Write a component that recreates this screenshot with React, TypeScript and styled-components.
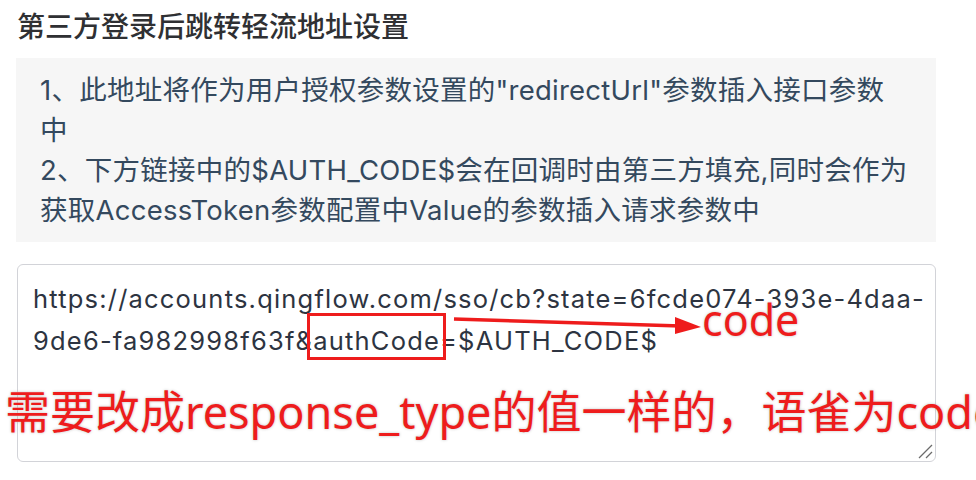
import styled, { createGlobalStyle } from "styled-components";

const GlobalStyle = createGlobalStyle`
  html, body {
    margin: 0;
    padding: 0;
    background: #ffffff;
  }
  body {
    font-family: "Inter", "Noto Sans CJK SC", sans-serif;
  }
`;

const Page = styled.div`
  width: 920px;
  padding: 9px 0 0 16px;
  display: flex;
  flex-direction: column;
`;

const Title = styled.h2`
  margin: 0 0 0 1px;
  font-size: 28px;
  line-height: 36px;
  font-weight: 500;
  color: #2f3033;
`;

const InfoBox = styled.div`
  margin-top: 13px;
  background: #f6f6f6;
  padding: 12px 24px;
  font-size: 27.5px;
  line-height: 40px;
  letter-spacing: 0.25px;
  color: #34495e;
`;

const InfoLine = styled.div`
  white-space: nowrap;
`;

const Field = styled.div`
  position: relative;
  margin: 22px 0 0 1px;
  height: 198px;
  box-sizing: border-box;
  border: 1.5px solid #d2d3d8;
  border-radius: 6px;
  padding: 13px 15px;
  font-size: 25.5px;
  line-height: 42px;
  letter-spacing: 1.2px;
  color: #2d3441;
`;

const FieldLine = styled.div`
  white-space: nowrap;
`;

const Mark = styled.span`
  position: relative;
  &::after {
    content: "";
    position: absolute;
    left: -6px;
    right: -6px;
    top: -12px;
    bottom: -4px;
    border: 3px solid #ee1c1c;
  }
`;

const Arrow = styled.svg`
  position: absolute;
  left: 433px;
  top: 44px;
  overflow: visible;
`;

const Note = styled.span`
  font-family: "Noto Sans", "Noto Sans CJK SC", sans-serif;
  color: #ee1c1c;
  letter-spacing: 0;
  text-shadow: 0 0 3px rgba(0, 0, 0, 0.25), 0 0 2px #fff;
  white-space: nowrap;
  position: absolute;
`;

const CodeNote = styled(Note)`
  left: 684px;
  top: 28px;
  font-size: 43px;
  line-height: 54px;
`;

const BigNote = styled(Note)`
  left: -13px;
  top: 120px;
  font-size: 45px;
  line-height: 54px;
`;

const Grip = styled.svg`
  position: absolute;
  right: 2px;
  bottom: 2px;
`;

export default function App() {
  return (
    <>
      <GlobalStyle />
      <Page>
        <Title>第三方登录后跳转轻流地址设置</Title>
        <InfoBox>
          <InfoLine>1、此地址将作为用户授权参数设置的"redirectUrl"参数插入接口参数</InfoLine>
          <InfoLine>中</InfoLine>
          <InfoLine>2、下方链接中的$AUTH_CODE$会在回调时由第三方填充,同时会作为</InfoLine>
          <InfoLine>获取AccessToken参数配置中Value的参数插入请求参数中</InfoLine>
        </InfoBox>
        <Field>
          <FieldLine>https://accounts.qingflow.com/sso/cb?state=6fcde074-393e-4daa-</FieldLine>
          <FieldLine>
            9de6-fa982998f63f&amp;<Mark>authCode</Mark>=$AUTH_CODE$
          </FieldLine>
          <Arrow width="250" height="30" viewBox="0 0 250 30">
            <line x1="3" y1="10" x2="230" y2="17" stroke="#ee1c1c" strokeWidth="3.5" />
            <polygon points="224,8 250,18 224,25" fill="#ee1c1c" />
          </Arrow>
          <CodeNote>code</CodeNote>
          <BigNote>需要改成response_type的值一样的，语雀为code</BigNote>
          <Grip width="16" height="16" viewBox="0 0 16 16">
            <line x1="2" y1="15" x2="15" y2="2" stroke="#6b6b6b" strokeWidth="1.2" />
            <line x1="9" y1="15" x2="15" y2="9" stroke="#6b6b6b" strokeWidth="1.2" />
          </Grip>
        </Field>
      </Page>
    </>
  );
}
